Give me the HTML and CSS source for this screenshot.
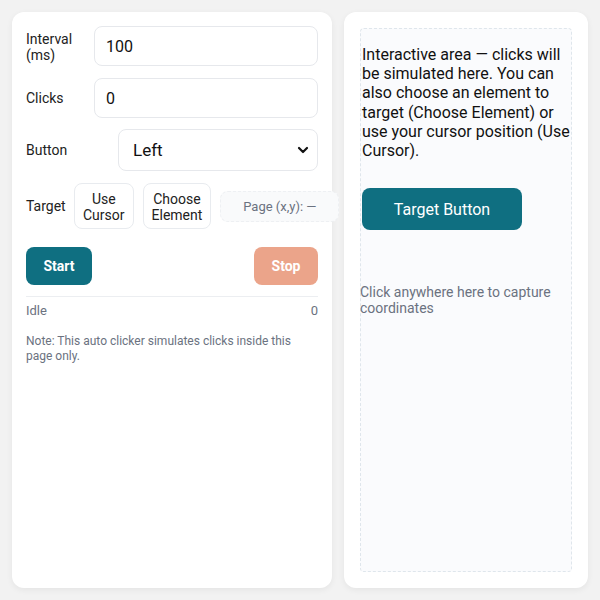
FILE: index.html
```html
<!DOCTYPE html>
<html>
<head>
<meta charset="utf-8">
<link rel="stylesheet" href="styles.css">
</head>
<body>
<div class="layout">
  <div class="card panel">
    <div class="row row-1">
      <label class="lbl lbl-fixed">Interval (ms)</label>
      <input class="field" type="text" value="100">
    </div>
    <div class="row row-2">
      <label class="lbl lbl-fixed">Clicks</label>
      <input class="field" type="text" value="0">
    </div>
    <div class="row row-3">
      <label class="lbl">Button</label>
      <div class="select">
        <span>Left</span>
        <svg class="chev" width="12" height="8" viewBox="0 0 12 8"><path d="M2 2 L6 6 L10 2" fill="none" stroke="#111" stroke-width="2.2" stroke-linecap="round" stroke-linejoin="round"/></svg>
      </div>
    </div>
    <div class="row row-4">
      <label class="lbl lbl-target">Target</label>
      <button class="small-btn">Use<br>Cursor</button>
      <button class="small-btn">Choose<br>Element</button>
      <div class="coords">Page (x,y): —</div>
    </div>
    <div class="actions">
      <button class="btn start">Start</button>
      <button class="btn stop">Stop</button>
    </div>
    <div class="status">
      <span>Idle</span>
      <span>0</span>
    </div>
    <p class="note">Note: This auto clicker simulates clicks inside this page only.</p>
  </div>
  <div class="card area-card">
    <div class="area">
      <p class="intro">Interactive area — clicks will be simulated here. You can also choose an element to target (Choose Element) or use your cursor position (Use Cursor).</p>
      <button class="target-btn">Target Button</button>
      <p class="caption">Click anywhere here to capture coordinates</p>
    </div>
  </div>
</div>
</body>
</html>
```
FILE: styles.css
```css
* { box-sizing: border-box; }
html, body { margin: 0; padding: 0; }
body {
  background: #f2f2f2;
  font-family: Roboto, "Liberation Sans", Arial, sans-serif;
  color: #1f1f1f;
  width: 600px;
  height: 600px;
  overflow: hidden;
}
.layout {
  display: grid;
  grid-template-columns: 320px 244px;
  gap: 12px;
  padding: 12px;
  height: 600px;
}
.card {
  background: #ffffff;
  border-radius: 12px;
  box-shadow: 0 2px 6px rgba(0,0,0,0.06);
  height: 576px;
}
.panel {
  padding: 14px;
  display: flex;
  flex-direction: column;
}
.row {
  display: flex;
  align-items: center;
}
.row-1 .lbl { margin-top: 2px; }
.row-2 { margin-top: 12px; }
.row-3 { margin-top: 11px; justify-content: space-between; }
.row-4 { margin-top: 12px; gap: 9px; }
.lbl {
  font-size: 14px;
  line-height: 16px;
  color: #222;
}
.lbl-fixed { width: 56px; margin-right: 12px; flex: 0 0 56px; }
.lbl-target { width: 39px; flex: 0 0 39px; }
.field {
  flex: 1;
  height: 40px;
  border: 1px solid #e6e8ec;
  border-radius: 8px;
  padding: 0 11px;
  font: 16px Roboto, "Liberation Sans", Arial, sans-serif;
  color: #111;
  background: #fff;
  outline: none;
  min-width: 0;
}
.select {
  width: 200px;
  height: 42px;
  border: 1px solid #e6e8ec;
  border-radius: 8px;
  display: flex;
  align-items: center;
  justify-content: space-between;
  padding: 0 8px 0 14px;
  font-size: 17px;
  color: #111;
}
.chev { display: block; }
.small-btn {
  flex: 0 0 auto;
  background: #fff;
  border: 1px solid #e8ebef;
  border-radius: 8px;
  padding: 7px 8px;
  font: 14px/16px Roboto, "Liberation Sans", Arial, sans-serif;
  color: #222;
  text-align: center;
  height: 46px;
}
.coords {
  flex: 0 0 119px;
  width: 119px;
  height: 31px;
  border: 1px dashed #eef0f3;
  background: #f9fafb;
  border-radius: 8px;
  font-size: 13px;
  color: #6b7280;
  display: flex;
  align-items: center;
  justify-content: center;
}
.actions {
  display: flex;
  justify-content: space-between;
  margin-top: 18px;
}
.btn {
  height: 38px;
  border: none;
  border-radius: 8px;
  color: #fff;
  font: 700 14px Roboto, "Liberation Sans", Arial, sans-serif;
}
.start { width: 66px; background: #0f6f81; }
.stop { width: 64px; background: #eba48a; }
.status {
  margin-top: 11px;
  border-top: 1px solid #eceef1;
  padding-top: 6px;
  display: flex;
  justify-content: space-between;
  font-size: 13px;
  line-height: 16px;
  color: #6b7280;
}
.note {
  margin: 15px 0 0;
  font-size: 12px;
  line-height: 15px;
  color: #6b7280;
}
.area-card { padding: 16px; }
.area {
  height: 100%;
  border: 1px dashed #dfe6ec;
  border-radius: 4px;
  background: #fafbfd;
  padding: 16px 0 0;
}
.intro {
  margin: 0 0 0 1px;
  font-size: 16px;
  line-height: 19.2px;
  color: #111;
}
.target-btn {
  display: block;
  margin: 28px 0 0 1px;
  width: 160px;
  height: 42px;
  border: none;
  border-radius: 8px;
  background: #0f6f81;
  color: #fff;
  font: 16px Roboto, "Liberation Sans", Arial, sans-serif;
}
.caption {
  margin: 54px 0 0 -1px;
  font-size: 14px;
  line-height: 16px;
  color: #6b7280;
}
```
